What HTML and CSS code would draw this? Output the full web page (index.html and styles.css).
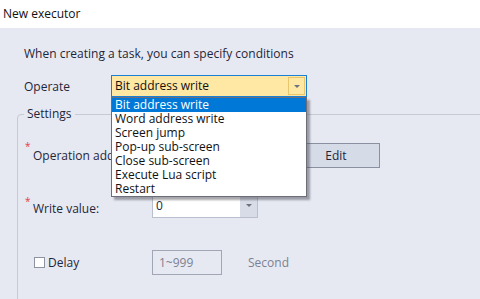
FILE: index.html
```html
<!DOCTYPE html>
<html>
<head>
<meta charset="utf-8">
<link rel="stylesheet" href="styles.css">
</head>
<body>
  <div class="titlebar">New executor</div>
  <div class="dialog">
    <p class="hint">When creating a task, you can specify conditions</p>
    <div class="operate">
      <span class="op-label">Operate</span>
      <div class="combo combo-active">
        <span class="combo-value">Bit address write</span>
        <span class="combo-btn"><i class="tri"></i></span>
      </div>
    </div>

    <fieldset class="settings">
      <legend>Settings</legend>
      <div class="field field-addr">
        <div class="flabel"><span class="req">*</span><span class="nowrap">Operation address:</span></div>
        <div class="textbox addr-box"></div>
        <button class="btn">Edit</button>
      </div>
      <div class="field field-value">
        <div class="flabel"><span class="req">*</span><span>Write value:</span></div>
        <div class="combo combo-plain">
          <span class="combo-value">0</span>
          <span class="combo-btn"><i class="tri"></i></span>
        </div>
      </div>
      <div class="field field-delay">
        <div class="flabel delay-label"><span class="check"></span><span>Delay</span></div>
        <div class="textbox disabled">1~999</div>
        <span class="unit">Second</span>
      </div>
    </fieldset>

    <ul class="dropdown">
      <li class="selected">Bit address write</li>
      <li>Word address write</li>
      <li>Screen jump</li>
      <li>Pop-up sub-screen</li>
      <li>Close sub-screen</li>
      <li>Execute Lua script</li>
      <li>Restart</li>
    </ul>
  </div>
</body>
</html>
```

FILE: styles.css
```css
html, body {
    margin: 0;
    height: 100%;
    overflow: hidden;
}
body {
    background: #e7e9f2;
    font-family: "Open Sans", "Liberation Sans", sans-serif;
    font-size: 12px;
    color: #1f2638;
}
.titlebar {
    height: 28px;
    line-height: 27px;
    padding-left: 3px;
    background: #ffffff;
    color: #111;
}
.dialog {
    position: relative;
}
.hint {
    margin: 0;
    padding: 18px 0 0 24px;
    line-height: 16px;
}
.operate {
    display: flex;
    align-items: center;
    margin-top: 13px;
    height: 22px;
}
.op-label {
    width: 87px;
    padding-left: 24px;
}
.combo {
    display: flex;
    box-sizing: border-box;
    border: 1px solid #b9bfcc;
    background: #fff;
}
.combo-value {
    flex: 1;
    padding-left: 3px;
    line-height: 20px;
}
.combo-btn {
    display: flex;
    align-items: center;
    justify-content: center;
    width: 17px;
}
.tri {
    width: 0;
    height: 0;
    border-left: 3px solid transparent;
    border-right: 3px solid transparent;
    border-top: 3px solid #6d7280;
}
.combo-active {
    width: 196px;
    height: 22px;
    border-color: #1a7fd6;
    background: #ffe7a4;
    color: #111;
}
.combo-active .combo-btn {
    border: 1px solid #e8c66e;
    margin: 1px;
    width: 15px;
}
.combo-plain {
    width: 106px;
    height: 25px;
}
.combo-plain .combo-value {
    line-height: 23px;
}
.combo-plain .combo-btn {
    background: #d8dce7;
}

.settings {
    margin: 9px -60px 0 17px;
    padding: 0 0 40px 6px;
    border: 1px solid #c6cad4;
    border-radius: 4px;
}
.settings legend {
    padding: 0 3px;
    line-height: 16px;
}
.field {
    display: flex;
    align-items: center;
    height: 25px;
}
.field-addr { margin-top: 21px; }
.field-value { margin-top: 25px; }
.field-delay { margin-top: 32px; }
.flabel {
    display: flex;
    width: 128px;
    align-self: stretch;
    align-items: center;
}
.nowrap {
    white-space: nowrap;
}
.req {
    align-self: flex-start;
    width: 8px;
    margin: -2px 0 0 1px;
    color: #e23b45;
    font-size: 10px;
    line-height: 10px;
}
.field-value .req { margin-top: 3px; }
.field-value .flabel span:last-child { padding-top: 5px; }
.textbox {
    box-sizing: border-box;
    height: 25px;
    border: 1px solid #b9bfcc;
    background: #fff;
}
.addr-box {
    width: 140px;
}
.btn {
    box-sizing: border-box;
    width: 88px;
    height: 25px;
    border: 1px solid #8a90a0;
    background: #d6dbe8;
    font: inherit;
    color: #1f2638;
    padding: 0;
}
.delay-label {
    padding-left: 10px;
    width: 118px;
}
.check {
    box-sizing: border-box;
    width: 11px;
    height: 11px;
    margin-right: 3px;
    border: 1px solid #8d93a0;
    background: #fff;
}
.disabled {
    width: 70px;
    padding-left: 6px;
    line-height: 23px;
    border-color: #a0a6b4;
    background: #e7e9f2;
    color: #7c8190;
}
.unit {
    margin-left: 26px;
    color: #7c8190;
}

.dropdown {
    position: absolute;
    left: 111px;
    top: 69px;
    width: 196px;
    margin: 0;
    padding: 0;
    list-style: none;
    box-sizing: border-box;
    border: 1px solid #6b6e78;
    background: #fff;
    box-shadow: 3px 3px 2px rgba(60, 60, 70, 0.45);
    color: #111;
}
.dropdown li {
    height: 14px;
    line-height: 14px;
    padding-left: 3px;
}
.dropdown .selected {
    background: #0078d7;
    color: #fff;
}
```
